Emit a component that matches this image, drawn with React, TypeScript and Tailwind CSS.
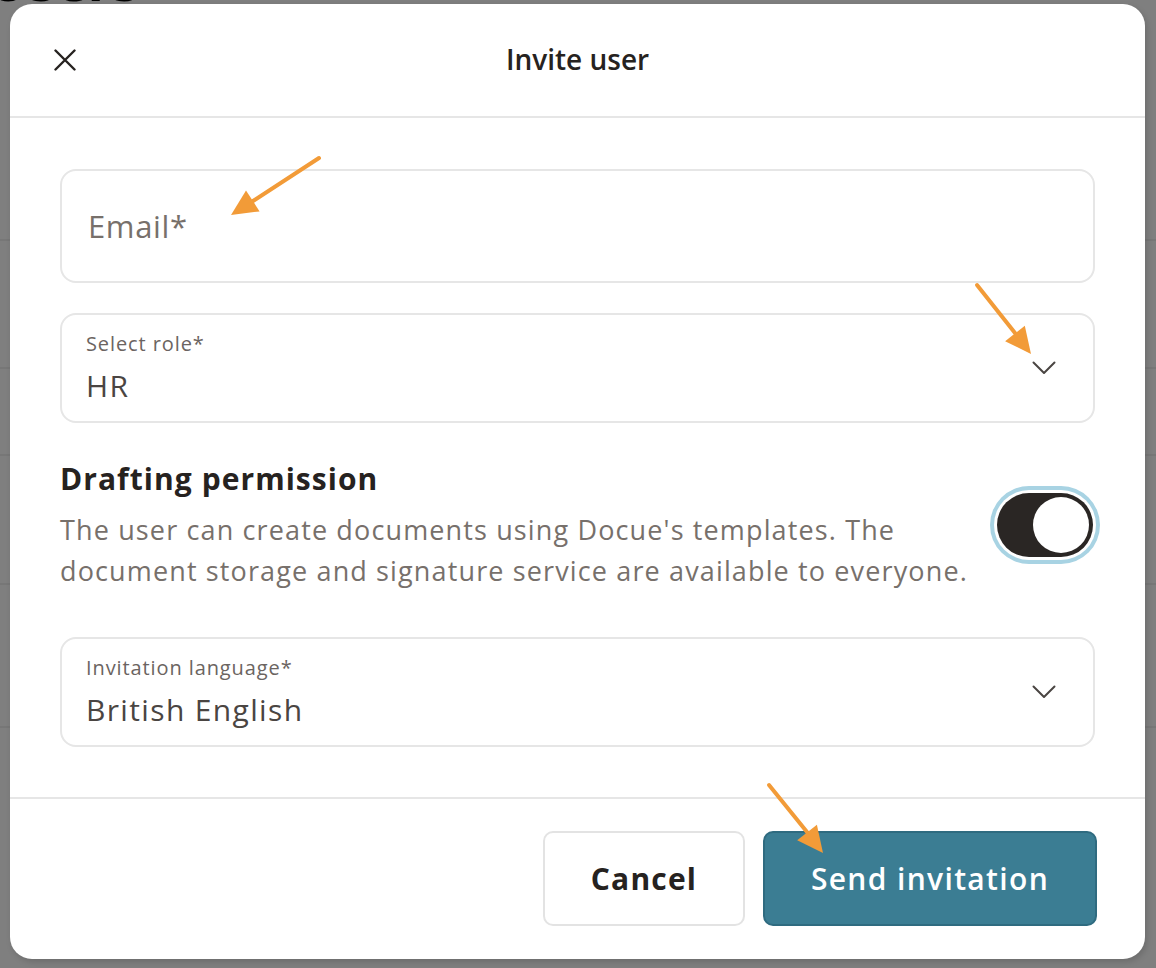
import React from 'react';

const font = "font-['Open_Sans','Noto_Sans',sans-serif]";

const Chevron: React.FC = () => (
  <svg width="24" height="14" viewBox="0 0 24 14" fill="none" className="shrink-0">
    <path d="M1.5 1.5L12 12L22.5 1.5" stroke="#4a4542" strokeWidth="2" strokeLinecap="round" strokeLinejoin="round" />
  </svg>
);

const CloseIcon: React.FC = () => (
  <svg width="22" height="22" viewBox="0 0 22 22" fill="none">
    <path d="M1.5 1.5L20.5 20.5M20.5 1.5L1.5 20.5" stroke="#262220" strokeWidth="2.4" strokeLinecap="round" />
  </svg>
);

/**
 * 選択フィールド（ラベル付き）
 */
const SelectField: React.FC<{ label: string; value: string }> = ({ label, value }) => (
  <div className="flex h-[110px] items-center justify-between rounded-[16px] border-2 border-[#e6e6e6] pl-[24px] pr-[37px]">
    <div className="flex flex-col">
      <span className="text-[20px] leading-[28px] tracking-[0.045em] text-[#6b6461]">{label}</span>
      <span className="mt-[8px] text-[30px] leading-[40px] tracking-[0.045em] text-[#4a4542]">{value}</span>
    </div>
    <Chevron />
  </div>
);

// 背景ページ（オーバーレイの下）
const BackgroundPage: React.FC = () => (
  <div className="-ml-[12px] text-black">
    <h1 className="-mt-[48px] h-[56px] text-[54px] font-bold leading-[56px]">Users</h1>
    <p className="mt-[102px] text-[22px] leading-[30px]">c</p>
    <div className="mt-[99px] border-b-2 border-[#eeeeee]" />
    <div className="h-[128px] border-b-2 border-[#eeeeee]" />
    <div className="h-[87px] border-b-2 border-[#eeeeee]" />
    <div className="h-[129px] border-b-2 border-[#eeeeee]" />
    <div className="h-[143px] border-b-2 border-[#eeeeee]" />
  </div>
);

// 注釈の矢印
const Arrows: React.FC = () => (
  <svg className="pointer-events-none absolute inset-0" width="1156" height="968" viewBox="0 0 1156 968">
    <g stroke="#f29b38" strokeWidth="4" strokeLinecap="round" fill="#f29b38">
      <line x1="319" y1="158" x2="253" y2="201" />
      <line x1="977" y1="285" x2="1015" y2="333" />
      <line x1="769" y1="785" x2="807" y2="832" />
    </g>
    <g fill="#f29b38">
      <polygon points="231,215 259.6,211.4 246,190.4" />
      <polygon points="1031,354 1005.1,341.2 1024.8,325.8" />
      <polygon points="823,853 797.2,840.2 816.9,824.8" />
    </g>
  </svg>
);

export default function App() {
  return (
    <div className={`relative h-[968px] w-full overflow-hidden bg-white ${font}`}>
      <BackgroundPage />
      <div className="absolute inset-0 bg-black/50 pl-[10px] pt-[4px]">
        <div className="flex h-[955px] w-[1135px] flex-col rounded-[22px] bg-white shadow-[2px_3px_6px_rgba(0,0,0,0.15)]">
          {/* ヘッダー */}
          <div className="relative flex h-[114px] items-center justify-center border-b-2 border-[#e6e6e6]">
            <button className="absolute left-[44px] top-[45px]">
              <CloseIcon />
            </button>
            <h2 className="-mt-[2px] text-[28px] font-semibold text-[#262220]">Invite user</h2>
          </div>

          {/* 本文 */}
          <div className="flex flex-col px-[50px] pb-[50px] pt-[51px]">
            <div className="flex h-[114px] items-center rounded-[16px] border-2 border-[#e6e6e6] px-[26px]">
              <span className="text-[31px] tracking-[0.02em] text-[#77706b]">Email*</span>
            </div>

            <div className="mt-[30px]">
              <SelectField label="Select role*" value="HR" />
            </div>

            <div className="mt-[36px] flex items-center justify-between">
              <div className="flex flex-col">
                <h3 className="text-[30px] font-bold leading-[40px] tracking-[0.035em] text-[#262220]">
                  Drafting permission
                </h3>
                <p className="mt-[10px] w-[920px] text-[27px] leading-[41px] tracking-[0.042em] text-[#77706b]">
                  The user can create documents using Docue's templates. The document storage and signature service are
                  available to everyone.
                </p>
              </div>
              <div className="mr-[2px] flex h-[64px] w-[96px] items-center justify-end rounded-full bg-[#2a2624] p-[4px] shadow-[0_0_0_3px_#ffffff,0_0_0_7px_#a8d3e3]">
                <div className="h-[56px] w-[56px] rounded-full bg-white" />
              </div>
            </div>

            <div className="mt-[46px]">
              <SelectField label="Invitation language*" value="British English" />
            </div>
          </div>

          {/* フッター */}
          <div className="flex justify-end gap-[18px] border-t-2 border-[#e6e6e6] pb-[32px] pl-[50px] pr-[48px] pt-[32px]">
            <button className="h-[95px] w-[202px] rounded-[10px] border-2 border-[#e3e3e3] text-[30px] font-bold tracking-[0.04em] text-[#262220]">
              Cancel
            </button>
            <button className="h-[95px] w-[334px] rounded-[10px] border-2 border-[#2f6b80] bg-[#3b7d93] text-[30px] font-semibold tracking-[0.045em] text-white">
              Send invitation
            </button>
          </div>
        </div>
      </div>
      <Arrows />
    </div>
  );
}
